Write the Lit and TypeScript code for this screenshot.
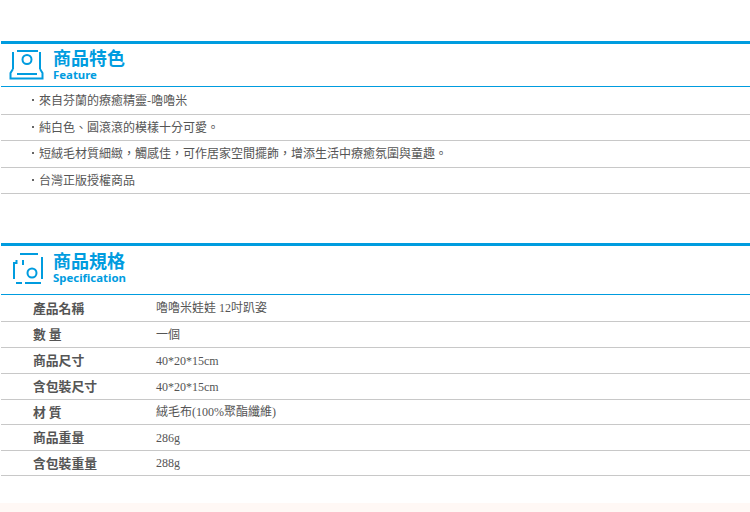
import { LitElement, html, css } from "lit";
import { customElement } from "lit/decorators.js";

const features: [string, number][] = [
  ["來自芬蘭的療癒精靈-嚕嚕米", 28],
  ["純白色、圓滾滾的模樣十分可愛。", 26],
  ["短絨毛材質細緻\uFF0C觸感佳\uFF0C可作居家空間擺飾\uFF0C增添生活中療癒氛圍與童趣。", 27],
  ["台灣正版授權商品", 26],
];
const specs: [string, string, number][] = [
  ["產品名稱", "嚕嚕米娃娃 12吋趴姿", 27],
  ["數 量", "一個", 26],
  ["商品尺寸", "40*20*15cm", 26],
  ["含包裝尺寸", "40*20*15cm", 26],
  ["材 質", "絨毛布(100%聚酯纖維)", 25],
  ["商品重量", "286g", 26],
  ["含包裝重量", "288g", 25],
];

@customElement("app-root")
export class AppRoot extends LitElement {
  static styles = css`
    :host { display: block; width: 750px; height: 512px; overflow: hidden; background: #fff;
      font-family: "Liberation Serif", "Noto Sans CJK TC", serif; font-size: 12px; color: #555; }
    .page { padding: 41px 0 0 1px; display: flex; flex-direction: column; }
    .section { display: flex; flex-direction: column; }
    .section.spec { margin-top: 49px; }
    .head { border-top: 3px solid #009cdf; border-bottom: 1px solid #009cdf; height: 42px; display: flex; align-items: flex-start; }
    .spec .head { height: 48px; }
    .head svg { flex: none; margin-left: 7px; }
    .titles { margin-left: 7px; padding-top: 5px; display: flex; flex-direction: column; color: #009cdf; font-weight: 700; }
    .spec .titles { padding-top: 6px; }
    .zh { font-family: "Liberation Sans", "Noto Sans CJK TC", sans-serif; font-size: 18px; line-height: 20px; }
    .en { font-family: "Noto Sans", sans-serif; font-size: 11.4px; line-height: 14px; margin-top: -1px; }
    .row { box-sizing: border-box; border-bottom: 1px solid #c8c8c8; display: flex; align-items: center; font-family: "Noto Sans CJK TC", sans-serif; font-size: 12px; padding: 0 0 2px 31px; line-height: 16px; }
    .row .dot { width: 2px; height: 2px; background: #666; margin-right: 5px; }
    .spec-row { box-sizing: border-box; border-bottom: 1px solid #c8c8c8; display: flex; align-items: center; line-height: 16px; padding-left: 32px; }
    .spec-row .k { width: 123px; padding-bottom: 1px; font-size: 12.8px; font-weight: 700; font-family: "Noto Sans CJK TC", sans-serif; }
    .band { margin-top: 27px; height: 9px; background: #fff8f5; }
  `;

  render() {
    return html`
      <div class="page">
        <div class="section">
          <div class="head">
            <svg width="38" height="40" viewBox="8 44 38 40" fill="none" stroke="#009cdf" stroke-width="2">
              <path d="M17 51h21M13 52v17M40 52v17M17 74h20"/>
              <circle cx="27" cy="59.500" r="4.500"/>
              <path d="M13 69L10.500 73v5.500h32V73L40 69"/>
            </svg>
            <div class="titles"><span class="zh">商品特色</span><span class="en">Feature</span></div>
          </div>
          ${features.map(([f, h]) => html`<div class="row" style="height:${h}px"><span class="dot"></span>${f}</div>`)}
        </div>
        <div class="section spec">
          <div class="head">
            <svg width="38" height="42" viewBox="8 246 38 42" fill="none" stroke="#009cdf" stroke-width="2">
              <path d="M20 254h18M42 257v22M14 279v-16h2.500v-3M23 260v5M16 283h6M25 283h16"/>
              <circle cx="32" cy="273" r="4.500"/>
            </svg>
            <div class="titles"><span class="zh">商品規格</span><span class="en">Specification</span></div>
          </div>
          ${specs.map(([k, v, h]) => html`<div class="spec-row" style="height:${h}px"><span class="k">${k}</span><span>${v}</span></div>`)}
        </div>
      </div>
      <div class="band"></div>
    `;
  }
}
